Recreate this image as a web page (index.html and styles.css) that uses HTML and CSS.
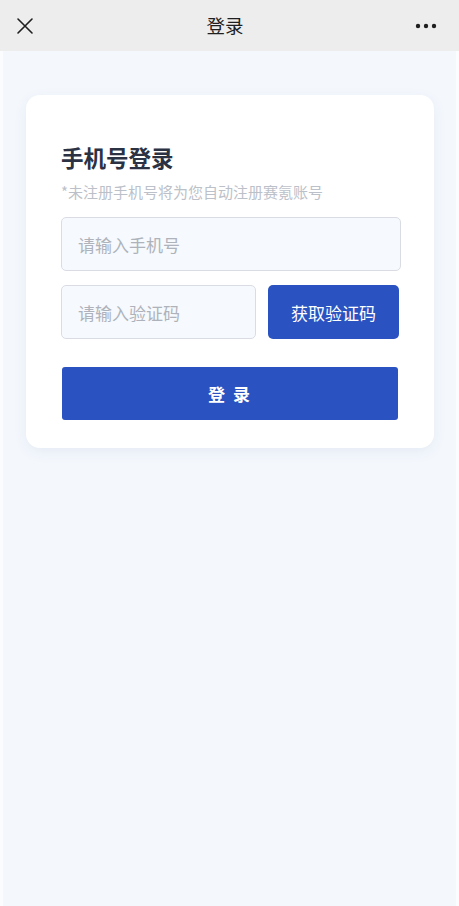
FILE: index.html
```html
<!DOCTYPE html>
<html lang="zh">
<head>
<meta charset="utf-8">
<title>登录</title>
<link rel="stylesheet" href="styles.css">
</head>
<body>
<div class="app">
  <header class="topbar">
    <span class="icon-close">
      <svg width="18" height="18" viewBox="0 0 18 18"><path d="M2 2 L16 16 M16 2 L2 16" stroke="#1f1f1f" stroke-width="1.6" stroke-linecap="round"/></svg>
    </span>
    <h1 class="topbar-title">登录</h1>
    <span class="icon-more">
      <svg width="22" height="6" viewBox="0 0 22 6"><circle cx="3" cy="3" r="2.2" fill="#1f1f1f"/><circle cx="11" cy="3" r="2.2" fill="#1f1f1f"/><circle cx="19" cy="3" r="2.2" fill="#1f1f1f"/></svg>
    </span>
  </header>
  <main class="content">
    <section class="card">
      <h2 class="card-title">手机号登录</h2>
      <p class="card-note">*未注册手机号将为您自动注册赛氪账号</p>
      <div class="field">请输入手机号</div>
      <div class="code-row">
        <div class="field field-code">请输入验证码</div>
        <button class="btn-code">获取验证码</button>
      </div>
      <button class="btn-login">登 录</button>
    </section>
  </main>
</div>
</body>
</html>
```
FILE: styles.css
```css
* { box-sizing: border-box; }
html, body { margin: 0; padding: 0; }
body {
  font-family: "Noto Sans CJK SC", "Noto Sans", sans-serif;
  background: #f4f8fd;
  width: 459px;
  height: 906px;
  overflow: hidden;
}
.app {
  height: 906px;
  display: flex;
  flex-direction: column;
  padding: 0 3px;
  background: #fbfcfe;
}
.topbar {
  height: 51px;
  background: #ededed;
  display: flex;
  align-items: center;
  justify-content: space-between;
  padding: 0 22px 0 13px;
  margin: 0 -3px;
  flex-shrink: 0;
}
.icon-close, .icon-more { display: flex; align-items: center; width: 24px; }
.icon-close svg { margin-left: 3px; }
.icon-more { justify-content: flex-end; }
.topbar-title {
  margin: 0;
  font-size: 18.5px;
  font-weight: 400;
  color: #1f1f1f;
  margin-top: -2px;
}
.content {
  flex: 1;
  background: #f4f8fd;
  padding: 44px 22px 0 23px;
}
.card {
  background: #ffffff;
  border-radius: 14px;
  box-shadow: 0 4px 14px rgba(40, 70, 130, 0.07);
  padding: 46px 33px 28px 35px;
}
.card-title {
  margin: 0;
  font-size: 22.5px;
  line-height: 32px;
  font-weight: 700;
  color: #2b3243;
}
.card-note {
  margin: 9px 0 15px;
  font-size: 15px;
  line-height: 20px;
  color: #bcc1c9;
}
.field {
  height: 54px;
  border: 1px solid #d9dde3;
  border-radius: 5px;
  background: #f6f9fd;
  padding: 0 16px;
  display: flex;
  align-items: center;
  font-size: 17px;
  color: #aeb3bb;
}
.code-row {
  display: flex;
  gap: 12px;
  margin-top: 14px;
  padding-right: 2px;
}
.field-code { width: 195px; }
.btn-code {
  flex: 1;
  height: 54px;
  border: none;
  border-radius: 5px;
  background: #2a52c1;
  color: #ffffff;
  font-family: inherit;
  font-size: 17px;
}
.btn-login {
  display: block;
  width: 336px;
  height: 53px;
  margin: 28px 0 0 1px;
  border: none;
  border-radius: 3px;
  background: #2a52c1;
  color: #ffffff;
  font-family: inherit;
  font-size: 17px;
  font-weight: 700;
  letter-spacing: 2px;
}
```
